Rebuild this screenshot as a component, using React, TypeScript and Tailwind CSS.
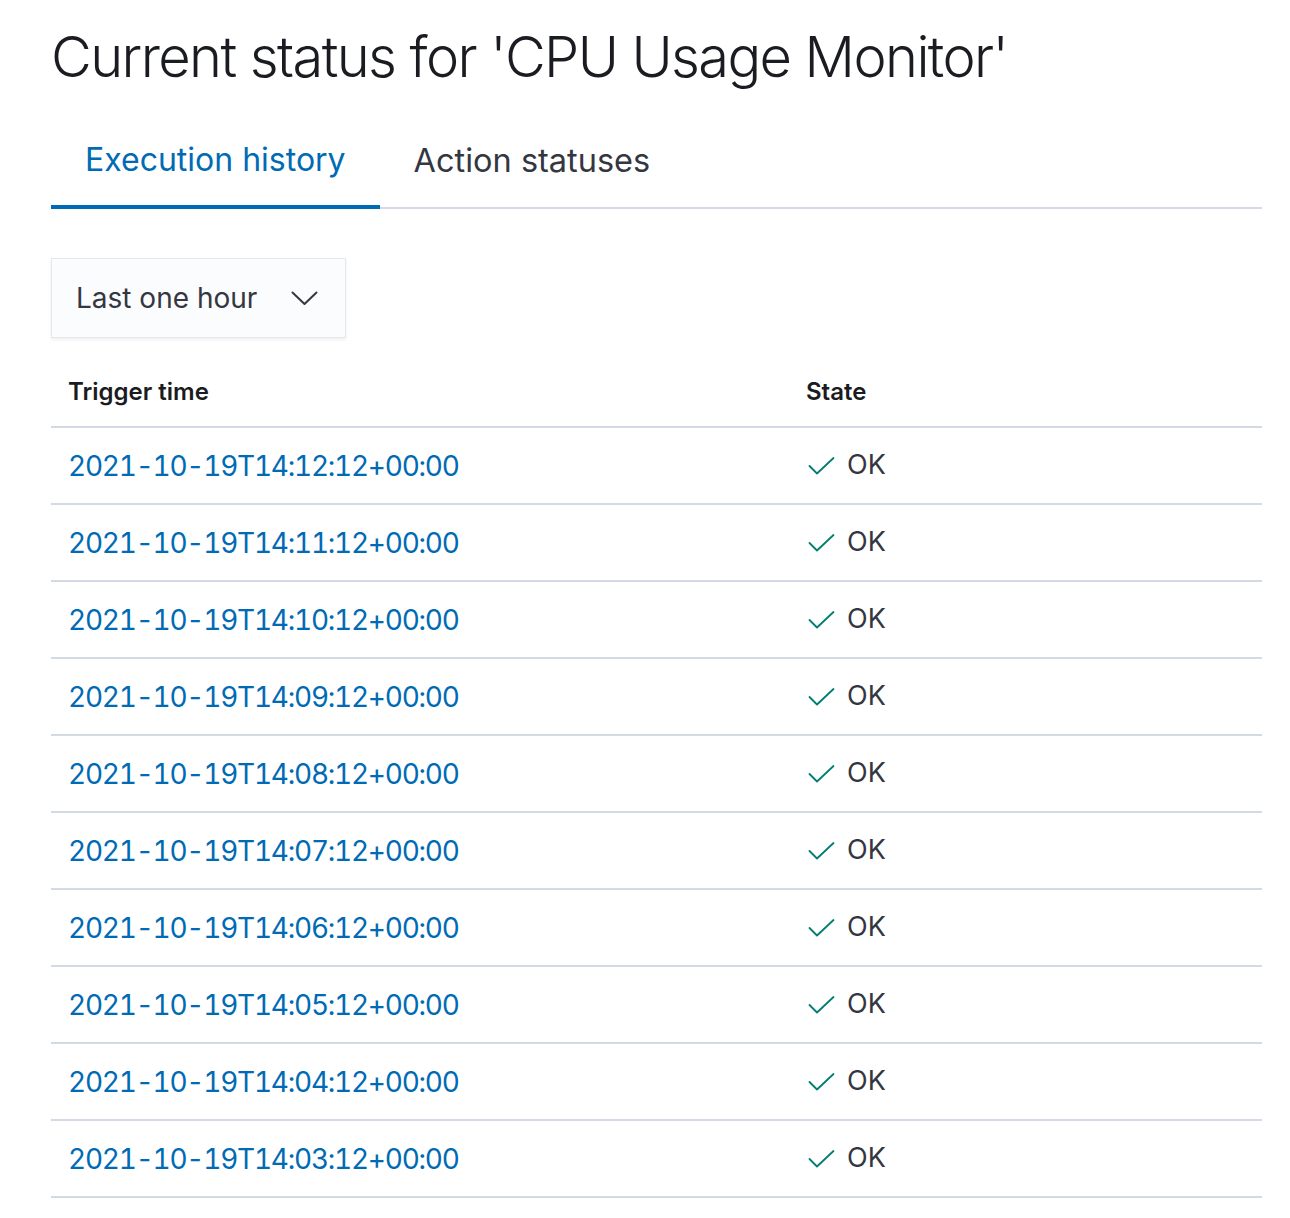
const ROWS = [
  "2021-10-19T14:12:12+00:00",
  "2021-10-19T14:11:12+00:00",
  "2021-10-19T14:10:12+00:00",
  "2021-10-19T14:09:12+00:00",
  "2021-10-19T14:08:12+00:00",
  "2021-10-19T14:07:12+00:00",
  "2021-10-19T14:06:12+00:00",
  "2021-10-19T14:05:12+00:00",
  "2021-10-19T14:04:12+00:00",
  "2021-10-19T14:03:12+00:00",
];

function Chevron() {
  return (
    <svg width="27" height="15" viewBox="0 0 27 15" fill="none" className="text-[#343741]">
      <path d="M1.5 1.5 13.5 13 25.5 1.5" stroke="currentColor" strokeWidth="2" strokeLinecap="round" strokeLinejoin="round" />
    </svg>
  );
}

function CheckMark() {
  return (
    <svg width="27" height="20" viewBox="0 0 27 20" fill="none" className="text-[#017d73]">
      <path d="M1.5 10 9 17.5 25.5 2" stroke="currentColor" strokeWidth="1.8" strokeLinecap="round" strokeLinejoin="round" />
    </svg>
  );
}

export default function App() {
  return (
    <div
      className="min-h-[1218px] bg-white pl-[51px] pr-[28px] pt-[22px] text-[#343741]"
      style={{ fontFamily: "Inter, 'Noto Sans', sans-serif" }}
    >
      <h1 className="text-[56px] font-light leading-[70px] tracking-[-1.6px] text-[#1a1c21]">
        Current status for 'CPU Usage Monitor'
      </h1>

      {/* tabs */}
      <div className="mt-[36px] flex border-b-2 border-[#d3dae6]">
        <button className="-mb-[2px] border-b-4 border-[#006bb4] px-[34px] pb-[25px] pt-[12px] text-[32px] leading-[40px] text-[#006bb4]">
          Execution history
        </button>
        <button className="px-[34px] pb-[25px] pt-[12px] text-[32.5px] leading-[40px] text-[#343741]">
          Action statuses
        </button>
      </div>

      {/* range select */}
      <div className="mt-[49px] flex h-[80px] w-[295px] items-center justify-between border border-[#e3e7ee] bg-[#fbfcfd] pl-[24px] pr-[27px] shadow-[0_2px_3px_rgba(0,0,0,0.06)]">
        <span className="text-[28px] text-[#343741]">Last one hour</span>
        <Chevron />
      </div>

      {/* table */}
      <table className="mt-[19px] w-full border-collapse text-left">
        <thead>
          <tr className="border-b-2 border-[#d3dae6]">
            <th className="h-[70px] w-[738px] pl-[17px] text-[24px] font-semibold text-[#1a1c21]">
              Trigger time
            </th>
            <th className="h-[70px] pl-[17px] text-[24px] font-semibold text-[#1a1c21]">State</th>
          </tr>
        </thead>
        <tbody>
          {ROWS.map((t) => (
            <tr key={t} className="border-b-2 border-[#d3dae6]">
              <td className="h-[77px] pl-[17px] text-[28px] tracking-[-1.25px] tabular-nums text-[#006bb4]">{t}</td>
              <td className="h-[77px] pl-[17px]">
                <div className="flex items-center gap-[12px] pl-[2px]">
                  <CheckMark />
                  <span className="text-[27px] text-[#343741]">OK</span>
                </div>
              </td>
            </tr>
          ))}
        </tbody>
      </table>
    </div>
  );
}
